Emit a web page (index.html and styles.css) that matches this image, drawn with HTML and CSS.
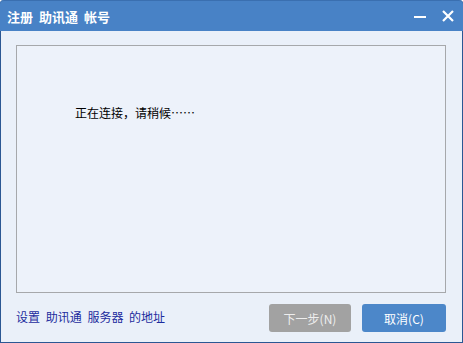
FILE: index.html
```html
<!DOCTYPE html>
<html lang="zh">
<head>
  <meta charset="UTF-8">
  <title>注册 助讯通 帐号</title>
  <link rel="stylesheet" href="styles.css">
</head>
<body>
<div class="window">
  <div class="titlebar">
    <span class="title">注册 助讯通 帐号</span>
    <div class="controls">
      <svg class="ctl" width="14" height="14" viewBox="0 0 14 14"><rect x="1" y="7" width="12" height="2" fill="#fff"/></svg>
      <svg class="ctl" width="14" height="14" viewBox="0 0 14 14"><path d="M2 2 L12 12 M12 2 L2 12" stroke="#fff" stroke-width="2.2"/></svg>
    </div>
  </div>
  <div class="content">
    <div class="panel">
      <p class="status">正在连接，请稍候……</p>
    </div>
    <div class="footer">
      <a class="server-link" href="#">设置 助讯通 服务器 的地址</a>
      <div class="buttons">
        <button class="btn btn-disabled">下一步(N)</button>
        <button class="btn btn-primary">取消(C)</button>
      </div>
    </div>
  </div>
</div>
</body>
</html>
```
FILE: styles.css
```css
body {
  margin: 0;
  padding: 0;
  font-family: "Noto Sans CJK SC", "DejaVu Sans", sans-serif;
}
.window {
  width: 463px;
  height: 343px;
  box-sizing: border-box;
  background-color: #eaf0f9;
  border: 1px solid #2b5793;
  border-top: none;
  border-radius: 4px 4px 0 0;
  display: flex;
  flex-direction: column;
}
.titlebar {
  height: 30px;
  background-color: #4882c6;
  border-radius: 4px 4px 0 0;
  display: flex;
  align-items: center;
  justify-content: space-between;
  padding: 0 8px 0 7px;
  margin: 0 -1px;
  border-top: 1px solid #3a6fb0;
}
.title {
  color: #fff;
  font-size: 13px;
  font-weight: bold;
  white-space: pre;
  word-spacing: 3px;
}
.controls {
  display: flex;
  gap: 14px;
  align-items: center;
}
.ctl {
  display: block;
}
.content {
  flex: 1;
  padding: 14px 16px 0 15px;
  display: flex;
  flex-direction: column;
}
.panel {
  height: 246px;
  border: 1px solid #a6a8ab;
  background-color: #edf2fa;
  padding-left: 58px;
}
.status {
  margin: 58px 0 0 0;
  font-size: 12px;
  color: #000;
}
.footer {
  display: flex;
  justify-content: space-between;
  align-items: center;
  margin-top: 11px;
}
.server-link {
  color: #1c2c9e;
  font-size: 12px;
  text-decoration: none;
  word-spacing: 3px;
  margin-top: -4px;
}
.buttons {
  display: flex;
  gap: 11px;
}
.btn {
  height: 28px;
  border: none;
  border-radius: 3px;
  color: #fff;
  font-family: "Noto Sans CJK SC", sans-serif;
  font-size: 12px;
  padding: 0;
}
.btn-disabled {
  width: 82px;
  background-color: #a2a2a2;
  color: #eeeeee;
}
.btn-primary {
  width: 84px;
  background-color: #4c87c9;
}
```
